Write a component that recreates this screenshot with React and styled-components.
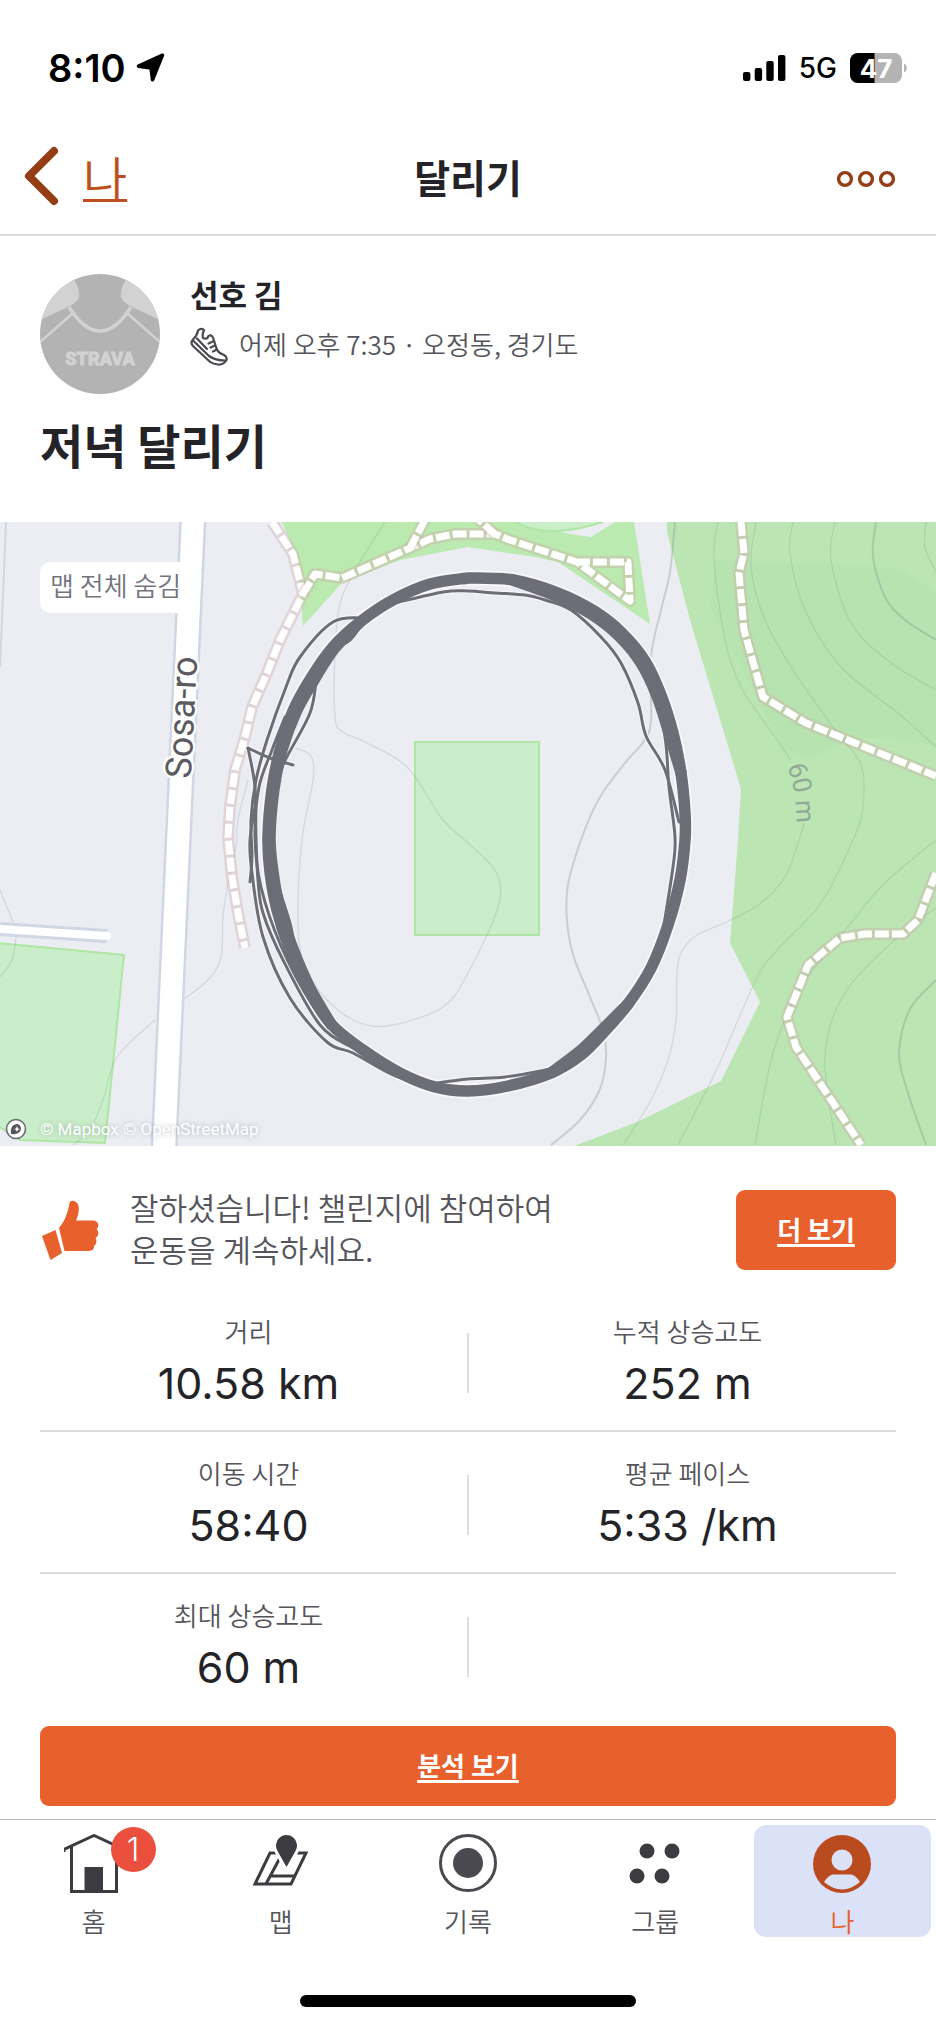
import React from "react";
import styled, { createGlobalStyle } from "styled-components";

const colors = {
  orange: "#e8602b",
  rust: "#c04f1f",
  darkRust: "#953d17",
  text: "#242428",
  muted: "#55555b",
  icon: "#3c3b40",
  line: "#dcdde1",
  route: "#6d6d78",
};

const korean = `"Noto Sans CJK KR", sans-serif`;
const latin = `Inter, "Noto Sans CJK KR", sans-serif`;

const GlobalStyle = createGlobalStyle`
  *, *::before, *::after {
    box-sizing: border-box;
  }
  body {
    margin: 0;
    background: #fff;
    color: ${colors.text};
    font-family: ${korean};
  }
  h1, h2, p, dl, dt, dd, ul {
    margin: 0;
    padding: 0;
    font-weight: 400;
  }
  svg {
    display: block;
    flex-shrink: 0;
  }
`;

const Screen = styled.div`
  display: flex;
  flex-direction: column;
  min-height: 100vh;
`;

const StatusBar = styled.div`
  display: flex;
  align-items: center;
  justify-content: space-between;
  height: 118px;
  padding: 18px 28px 0 48px;
  color: #000;
  font-family: ${latin};
`;

const StatusGroup = styled.div`
  display: flex;
  align-items: center;
  gap: ${(props) => props.$gap}px;
`;

const Clock = styled.span`
  font-size: 38px;
  font-weight: 600;
  line-height: 40px;
`;

const Network = styled.span`
  font-size: 28px;
  font-weight: 500;
  line-height: 32px;
`;

const Header = styled.header`
  display: grid;
  grid-template-columns: 1fr auto 1fr;
  align-items: center;
  height: 118px;
  padding: 0 24px;
  border-bottom: 2px solid ${colors.line};
`;

const BackLink = styled.a`
  display: flex;
  align-items: center;
  justify-self: start;
  gap: 24px;
  color: ${colors.rust};
  font-size: 48px;
  font-weight: 350;
  line-height: 60px;
  text-decoration: none;

  span {
    text-decoration: underline;
    text-decoration-thickness: 3px;
    text-underline-offset: 2px;
    text-decoration-skip-ink: none;
  }
`;

const HeaderTitle = styled.h1`
  font-size: 39px;
  font-weight: 700;
  line-height: 60px;
`;

const MoreButton = styled.button`
  justify-self: end;
  margin-right: 16px;
  padding: 0;
  border: 0;
  background: none;
  cursor: pointer;
`;

const Profile = styled.section`
  padding: 38px 40px 48px;
`;

const Athlete = styled.div`
  display: flex;
  gap: 30px;
  margin-bottom: 20px;
`;

const AthleteText = styled.div`
  display: flex;
  flex-direction: column;
  gap: 8px;
`;

const Name = styled.p`
  font-size: 31px;
  font-weight: 700;
  line-height: 40px;
`;

const Meta = styled.p`
  display: flex;
  align-items: center;
  gap: 11px;
  color: ${colors.muted};
  font-size: 26px;
  font-weight: 350;
  line-height: 40px;
`;

const ActivityTitle = styled.h2`
  font-size: 47px;
  font-weight: 700;
  line-height: 60px;
`;

const MapFrame = styled.section`
  position: relative;
  overflow: hidden;
  background: #ebedf3;
`;

const MapSvg = styled.svg`
  width: 100%;
  height: auto;
`;

const MapChip = styled.span`
  position: absolute;
  top: 40px;
  left: 40px;
  padding: 0 10px 6px;
  border-radius: 10px;
  background: #fff;
  color: #74737f;
  font-size: 26px;
  font-weight: 350;
  line-height: 45px;
`;

const Attribution = styled.div`
  position: absolute;
  bottom: 4px;
  left: 5px;
  display: flex;
  align-items: center;
  gap: 13px;
  color: #fff;
  font-family: Roboto, sans-serif;
  font-size: 17px;
  line-height: 26px;
  text-shadow: 0 0 5px rgba(90, 90, 110, 0.4);
`;

const Promo = styled.section`
  display: flex;
  align-items: center;
  gap: 28px;
  padding: 40px 40px 16px;
`;

const PromoText = styled.p`
  flex: 1;
  padding-bottom: 4px;
  color: ${colors.muted};
  font-size: 31px;
  font-weight: 350;
  line-height: 42px;
  word-break: keep-all;

  span {
    display: block;
  }
`;

const Button = styled.button`
  display: block;
  width: ${(props) => (props.$block ? "100%" : "160px")};
  height: 80px;
  padding: 0 0 4px;
  border: 0;
  border-radius: 9px;
  background: ${colors.orange};
  color: #fff;
  font-family: ${korean};
  font-size: 26px;
  font-weight: 700;
  text-decoration: underline;
  text-decoration-thickness: 3px;
  text-underline-offset: 4px;
  text-decoration-skip-ink: none;
  cursor: pointer;
`;

const Stats = styled.dl`
  padding: 0 40px;
`;

const StatRow = styled.div`
  display: grid;
  grid-template-columns: 1fr 2px 1fr;
  column-gap: 10px;
  align-items: center;
  height: 142px;
  padding-bottom: 18px;
  border-bottom: 2px solid ${(props) => (props.$last ? "transparent" : colors.line)};
`;

const Stat = styled.div`
  display: flex;
  flex-direction: column;
  align-items: center;
  gap: 8px;
  padding-top: 16px;
`;

const Separator = styled.span`
  height: 60px;
  margin-top: 24px;
  background: ${colors.line};
`;

const StatLabel = styled.dt`
  color: ${colors.muted};
  font-size: 26px;
  font-weight: 350;
  line-height: 40px;
`;

const StatValue = styled.dd`
  font-family: ${latin};
  font-size: 43px;
  line-height: 48px;
`;

const Analysis = styled.div`
  padding: 10px 40px 13px;
`;

const TabBar = styled.nav`
  display: grid;
  grid-template-columns: repeat(5, 1fr);
  padding: 5px 0;
  border-top: 1px solid #b9b9bb;
`;

const Tab = styled.a`
  display: flex;
  flex-direction: column;
  align-items: center;
  height: 112px;
  margin: 0 5px;
  padding-top: 9px;
  gap: 7px;
  border-radius: 12px;
  background: ${(props) => (props.$active ? "#dbe1f6" : "transparent")};
  color: ${(props) => (props.$active ? colors.orange : colors.muted)};
  font-size: 26px;
  font-weight: 350;
  line-height: 40px;
  text-decoration: none;
`;

const TabIcon = styled.span`
  position: relative;
`;

const Badge = styled.span`
  position: absolute;
  top: -7px;
  right: -32px;
  width: 45px;
  height: 45px;
  border-radius: 50%;
  background: #ea4e3d;
  color: #fff;
  font-family: ${latin};
  font-size: 32px;
  line-height: 45px;
  text-align: center;
`;

const HomeIndicator = styled.div`
  width: 36%;
  height: 12px;
  margin: 53px auto 20px;
  border-radius: 6px;
  background: #000;
`;

// Catmull-Rom through the points, written out as cubic beziers
function smooth(points) {
  let d = `M${points[0].join(" ")}`;
  for (let i = 0; i < points.length - 1; i++) {
    const p0 = points[i - 1] || points[i];
    const p1 = points[i];
    const p2 = points[i + 1];
    const p3 = points[i + 2] || p2;
    const c1 = [p1[0] + (p2[0] - p0[0]) / 6, p1[1] + (p2[1] - p0[1]) / 6];
    const c2 = [p2[0] - (p3[0] - p1[0]) / 6, p2[1] - (p3[1] - p1[1]) / 6];
    d += `C${c1.join(" ")} ${c2.join(" ")} ${p2.join(" ")}`;
  }
  return d;
}

const contours = [
  [[718, 0], [714, 38], [725, 118], [741, 165], [768, 205], [791, 238]],
  [[804, 301], [799, 318], [785, 355], [761, 381], [731, 398], [697, 413], [682, 429], [677, 451], [676, 498], [668, 538], [650, 580], [623, 623]],
  [[756, 0], [751, 45], [765, 98], [795, 151], [835, 208], [861, 243], [863, 285], [853, 318], [821, 381], [780, 425], [761, 448], [741, 491], [715, 551], [678, 623]],
  [[793, 0], [790, 31], [805, 88], [841, 145], [898, 191], [936, 225]],
  [[835, 0], [831, 38], [851, 101], [891, 141], [936, 168]],
  [[926, 0], [925, 25], [936, 50]],
  [[936, 318], [885, 361], [851, 401], [801, 465], [773, 531], [755, 623]],
  [[936, 386], [898, 415], [845, 471], [825, 535], [836, 623]],
  [[385, 0], [357, 45], [340, 81], [335, 131], [335, 195], [343, 210], [367, 221], [407, 245], [443, 298], [468, 321], [496, 350], [498, 385], [468, 451], [443, 485], [393, 503], [360, 501], [327, 478], [305, 445], [298, 401], [302, 318], [313, 258], [311, 234], [295, 226]],
  [[248, 258], [238, 298], [236, 325], [228, 361], [223, 395], [221, 435], [208, 458], [184, 477]],
  [[155, 498], [117, 535], [103, 578], [90, 608], [73, 623]],
  [[0, 368], [13, 400]],
  [[16, 415], [12, 438], [0, 455]],
];

const indexContours = [
  [[675, 0], [670, 50], [661, 88], [651, 135], [651, 198], [644, 219], [625, 241], [600, 275], [581, 318], [567, 370], [571, 425], [590, 475], [603, 508], [606, 535], [600, 567], [580, 598], [551, 623]],
  [[876, 0], [873, 35], [885, 75], [905, 98], [936, 118]],
  [[936, 458], [910, 487], [899, 531], [908, 571], [926, 623]],
];

const footpaths = [
  "M272 0L293 32L303 72L280 118L267 151L252 185L245 215L235 248L230 285L228 315L232 355L238 391L245 426",
  "M303 72L315 52L342 56L410 26L430 17L455 12H495L510 18L577 40L630 79L628 40H577",
  "M410 26L425 -2",
  "M495 12L479 -2",
  "M741 0L744 31L739 51L744 108L763 175L806 201L936 254",
  "M936 351L918 398L903 412H865L840 416L808 443L787 495L796 525L861 623",
];

const loop = [
  [468, 56], [430, 62], [393, 78], [360, 100], [333, 125], [311, 156], [293, 189], [280, 228], [272, 267], [268, 315], [270, 350], [277, 388], [290, 428], [308, 467], [331, 502], [363, 528], [400, 551], [435, 565], [468, 569], [508, 564], [551, 551], [581, 533], [603, 511], [628, 482], [651, 446], [668, 403], [680, 358], [685, 318], [685, 291], [681, 251], [673, 211], [661, 173], [645, 139], [622, 111], [594, 89], [558, 71], [513, 58], [468, 56],
];

// stretches where the laps spread out; both ends sit on the loop
const wideStretches = [
  [[513, 58], [556, 74], [591, 92], [619, 114], [641, 141], [657, 174], [669, 211], [681, 251]],
  [[360, 100], [334, 127], [314, 158], [296, 190], [282, 228], [274, 267], [270, 315], [273, 350], [280, 388], [293, 427], [310, 466], [331, 502]],
  [[551, 551], [579, 530], [601, 509], [628, 482]],
];

// single laps that drift away from the bundle
const strands = [
  [[365, 96], [333, 100], [300, 135], [286, 165], [267, 218], [256, 258], [251, 298], [252, 335], [250, 360]],
  [[293, 243], [270, 236], [248, 226]],
  [[248, 226], [255, 265], [256, 315], [258, 358], [263, 391], [283, 438], [320, 503], [353, 526]],
  [[256, 280], [250, 318], [252, 351], [263, 415], [290, 476], [327, 520], [353, 531], [393, 553], [425, 563]],
  [[360, 105], [350, 118], [330, 131], [318, 151], [310, 191], [283, 243], [275, 275]],
  [[285, 195], [272, 228], [259, 265], [255, 315], [261, 365], [281, 424], [312, 482], [340, 513]],
  [[395, 81], [443, 70], [468, 69], [495, 71], [525, 73], [545, 78], [571, 88], [601, 115], [621, 141], [638, 181], [646, 214], [665, 248], [679, 300]],
  [[653, 165], [665, 215], [669, 265], [675, 315], [673, 345], [662, 415]],
  [[430, 562], [468, 557], [505, 555], [551, 547]],
  [[272, 335], [281, 372], [290, 401], [296, 428], [308, 460]],
];

function Trail({ d }) {
  return (
    <g fill="none" strokeLinejoin="round">
      <path d={d} stroke="#cfa8a8" strokeOpacity="0.36" strokeWidth="12" />
      <path d={d} stroke="#fff" strokeWidth="7" strokeDasharray="14 3" />
    </g>
  );
}

function RouteMap() {
  return (
    <MapSvg viewBox="0 0 936 624" role="img" aria-label="Sosa-ro">
      <path
        d="M282 0L298 38L303 104L342 61L400 38L468 25L535 35L558 40L650 102L634 0Z"
        fill="#baeab0"
      />
      <path d="M508 0H518L570 12L591 15L615 0Z" fill="#ebedf3" />
      <path d="M516 0Q546 18 603 0" fill="#caeec9" stroke="#aee6a3" strokeWidth="2" />
      <path
        d="M667 0V10L690 98L741 267L738 318L730 421L760 480L721 559L637 600L574 624H936V0Z"
        fill="#bbe6b4"
      />
      <path
        d="M716 38L898 46L936 70V225L885 215L848 218L813 235L785 230L761 185L710 85Z"
        fill="#b7e3b1"
      />
      <path
        d="M-2 421L124 433L105 621L20 618L-2 604Z"
        fill="#caeec9"
        stroke="#aee6a3"
        strokeWidth="2"
      />
      <rect x="415" y="220" width="124" height="193" fill="#caeec9" stroke="#aee6a3" strokeWidth="2" />

      <g fill="none" stroke="#6f8a84" strokeOpacity="0.2" strokeWidth="1.3">
        {contours.map((points, i) => (
          <path key={i} d={smooth(points)} />
        ))}
      </g>
      <g fill="none" stroke="#6f8a84" strokeOpacity="0.3" strokeWidth="2">
        {indexContours.map((points, i) => (
          <path key={i} d={smooth(points)} />
        ))}
      </g>

      <path d="M6 0L0 145" stroke="#d0d6e3" strokeWidth="2" />
      <path d="M0 407L107 414" stroke="#d0d6e3" strokeWidth="14" />
      <path d="M0 407L107 414" stroke="#fff" strokeWidth="8" strokeLinecap="round" />
      <path d="M193 -4L164 628" stroke="#d0d6e3" strokeWidth="27" />
      <path d="M193 -4L164 628" stroke="#fff" strokeWidth="22" />

      {footpaths.map((d) => (
        <Trail key={d} d={d} />
      ))}

      <g fill="none" stroke="#f8f8fb" strokeLinecap="round">
        <path d={smooth(loop)} strokeWidth="15" />
        {strands.map((points, i) => (
          <path key={i} d={smooth(points)} strokeWidth="5" />
        ))}
      </g>
      <g fill="none" stroke={colors.route} strokeLinecap="round">
        <path d={smooth(loop)} strokeWidth="11.5" />
        {wideStretches.map((points, i) => (
          <path key={i} d={smooth(points)} strokeWidth="11.5" />
        ))}
        {strands.map((points, i) => (
          <path key={i} d={smooth(points)} strokeWidth="3" />
        ))}
      </g>

      <text
        transform="translate(194 196) rotate(-87)"
        textAnchor="middle"
        fontFamily="Roboto, sans-serif"
        fontSize="36"
        fill="#5a5a5f"
        stroke="#fff"
        strokeWidth="5"
        strokeLinejoin="round"
        paintOrder="stroke"
      >
        Sosa-ro
      </text>
      <path id="elevation-line" d="M787 244C794 264 797 277 797 322" fill="none" />
      <text fontFamily="Roboto, sans-serif" fontSize="26" fill="#93a998">
        <textPath href="#elevation-line">60 m</textPath>
      </text>
    </MapSvg>
  );
}

function LocationIcon() {
  return (
    <svg width="30" height="30" viewBox="0 0 30 30">
      <path
        d="M2.5 13.2L26.5 2.2L16.5 26.8L15 15Z"
        stroke="#000"
        strokeWidth="3.5"
        strokeLinejoin="round"
      />
    </svg>
  );
}

function SignalIcon() {
  return (
    <svg width="43" height="28" viewBox="0 0 43 28">
      <rect x="0" y="18" width="7.4" height="9" rx="2" />
      <rect x="11.7" y="14" width="7.4" height="13" rx="2" />
      <rect x="23.3" y="7" width="7.4" height="20" rx="2" />
      <rect x="35" y="1" width="7.4" height="26" rx="2" />
    </svg>
  );
}

function BatteryIcon() {
  return (
    <svg width="58" height="30" viewBox="0 0 58 30">
      <rect width="52" height="30" rx="8" fill="#b3b3b3" />
      <path d="M8 0H24.5V30H8A8 8 0 0 1 0 22V8A8 8 0 0 1 8 0Z" />
      <path d="M54 10.5A5 5 0 0 1 54 19.5Z" fill="#b3b3b3" />
      <text
        x="26"
        y="25"
        textAnchor="middle"
        fill="#fff"
        fontFamily="Inter, sans-serif"
        fontSize="26"
        fontWeight="700"
      >
        47
      </text>
    </svg>
  );
}

function Avatar() {
  return (
    <svg width="120" height="120" viewBox="0 0 120 120" role="img" aria-label="선호 김">
      <clipPath id="avatar-clip">
        <circle cx="60" cy="60" r="60" />
      </clipPath>
      <g clipPath="url(#avatar-clip)">
        <rect width="120" height="120" fill="#b3b3b3" />
        <g fill="#d2d2d2">
          <path d="M33 4Q40 14 39 23Q37 29 26 34L-2 47V0Z" />
          <path d="M87 4Q80 14 81 23Q83 29 94 34L122 47V0Z" />
        </g>
        <g fill="none" stroke="#d2d2d2">
          <path d="M29 33Q44 57 60 57Q76 57 91 33" strokeWidth="3.4" />
          <path d="M33 39L0 68M87 39L120 68" strokeWidth="2.4" />
        </g>
        <text
          x="60"
          y="91"
          textAnchor="middle"
          fill="#d2d2d2"
          stroke="#d2d2d2"
          strokeWidth="0.8"
          fontFamily="Roboto, sans-serif"
          fontSize="18"
          fontWeight="900"
        >
          STRAVA
        </text>
      </g>
    </svg>
  );
}

function ShoeIcon() {
  return (
    <svg
      width="38"
      height="44"
      viewBox="0 -6 38 44"
      fill="none"
      stroke="#4a494f"
      strokeWidth="2.2"
      strokeLinejoin="round"
      strokeLinecap="round"
    >
      <path d="M8 2.500Q11 -0.500 14 2Q12 7 13 10Q17 12 18.500 8Q21 6 23 9.500L26 19Q27 24.500 34 27Q37.500 29 36.500 32Q33.500 37 28 36.500Q22 36 18 32L3 18Q0 14.500 3 11.500Q7 8 8 2.500Z" />
      <path d="M3 12.500L19 28Q25 32.500 35.500 32.500M7 10.500L17 21" />
      <path d="M18.500 15.500L23 13.500M20.500 19.500L25 17.500M23 23.500L27 21.500" />
    </svg>
  );
}

function ThumbIcon() {
  return (
    <svg width="62" height="60" viewBox="0 0 62 60" fill={colors.orange}>
      <path d="M19 28C25 21 28 12 29.500 3C30 -0.500 37 0 38.500 6C39.500 11 38 16 36 20.500H53C60 21 59 28 56.500 29C60 32 58 37 55.500 38C57.500 41 56 45 54 46C54.500 50 51 51 48 51H24.500Z" />
      <path d="M2 36L15.500 30L22 53L10.500 60Z" />
    </svg>
  );
}

function HomeIcon() {
  return (
    <svg width="60" height="60" viewBox="0 0 60 60" fill="none" stroke={colors.icon} strokeWidth="3">
      <path d="M0 18V15.500L30 1.500L60 15.500V18" />
      <path d="M7.500 13V57.500H52.500V13" />
      <rect x="20.500" y="33" width="18.500" height="24" fill={colors.icon} stroke="none" />
    </svg>
  );
}

function MapsIcon() {
  return (
    <svg width="60" height="60" viewBox="0 0 60 60" fill="none" stroke={colors.icon} strokeWidth="3">
      <path d="M19 19H55L40 50H4Z" />
      <path d="M15 50L31 20M18 42H44" />
      <path
        d="M35.500 35L26 17A11 11 0 1 1 45 17Z"
        stroke="#fff"
        strokeWidth="5"
        fill={colors.icon}
      />
      <path
        d="M35.500 33L26.500 17A10.500 10.500 0 1 1 44.500 17Z"
        stroke="none"
        fill={colors.icon}
      />
    </svg>
  );
}

function RecordIcon() {
  return (
    <svg width="60" height="60" viewBox="0 0 60 60">
      <circle cx="30" cy="29" r="27.5" fill="none" stroke="#4a494f" strokeWidth="3" />
      <circle cx="30" cy="29" r="15" fill="#4a494f" />
    </svg>
  );
}

function GroupsIcon() {
  return (
    <svg width="60" height="60" viewBox="0 0 60 60" fill={colors.icon}>
      <circle cx="22" cy="17" r="7.5" />
      <circle cx="47" cy="17" r="7.5" />
      <circle cx="12" cy="42" r="7.5" />
      <circle cx="37" cy="42" r="7.5" />
    </svg>
  );
}

function YouIcon() {
  return (
    <svg width="60" height="60" viewBox="0 0 60 60">
      <circle cx="30" cy="30" r="29" fill="#ba4b1e" />
      <circle cx="30" cy="26" r="10.5" fill="#dbe1f6" />
      <path d="M12 48Q17 40.500 21 40.500H39Q43 40.500 48 48Q30 63 12 48Z" fill="#dbe1f6" />
    </svg>
  );
}

const stats = [
  [
    { label: "거리", value: "10.58 km" },
    { label: "누적 상승고도", value: "252 m" },
  ],
  [
    { label: "이동 시간", value: "58:40" },
    { label: "평균 페이스", value: "5:33 /km" },
  ],
  [{ label: "최대 상승고도", value: "60 m" }],
];

const tabs = [
  { label: "홈", icon: HomeIcon, badge: 1 },
  { label: "맵", icon: MapsIcon },
  { label: "기록", icon: RecordIcon },
  { label: "그룹", icon: GroupsIcon },
  { label: "나", icon: YouIcon, active: true },
];

function StatCell({ label, value }) {
  return (
    <Stat>
      <StatLabel>{label}</StatLabel>
      <StatValue>{value}</StatValue>
    </Stat>
  );
}

export default function App() {
  return (
    <>
      <GlobalStyle />
      <Screen>
        <StatusBar>
          <StatusGroup $gap={10}>
            <Clock>8:10</Clock>
            <LocationIcon />
          </StatusGroup>
          <StatusGroup $gap={13}>
            <SignalIcon />
            <Network>5G</Network>
            <BatteryIcon />
          </StatusGroup>
        </StatusBar>

        <Header>
          <BackLink href="#back">
            <svg width="35" height="60" viewBox="0 0 35 60">
              <path
                d="M30 5L5 30L30 55"
                fill="none"
                stroke={colors.darkRust}
                strokeWidth="8"
                strokeLinecap="round"
                strokeLinejoin="round"
              />
            </svg>
            <span>나</span>
          </BackLink>
          <HeaderTitle>달리기</HeaderTitle>
          <MoreButton type="button" aria-label="더 보기">
            <svg width="60" height="24" viewBox="0 0 60 24" fill="none" stroke={colors.darkRust} strokeWidth="3.4">
              <circle cx="9" cy="15" r="6.4" />
              <circle cx="30" cy="15" r="6.4" />
              <circle cx="51" cy="15" r="6.4" />
            </svg>
          </MoreButton>
        </Header>

        <Profile>
          <Athlete>
            <Avatar />
            <AthleteText>
              <Name>선호 김</Name>
              <Meta>
                <ShoeIcon />
                어제 오후 7:35 · 오정동, 경기도
              </Meta>
            </AthleteText>
          </Athlete>
          <ActivityTitle>저녁 달리기</ActivityTitle>
        </Profile>

        <MapFrame>
          <RouteMap />
          <MapChip>맵 전체 숨김</MapChip>
          <Attribution>
            <svg width="22" height="22" viewBox="0 0 22 22">
              <circle cx="11" cy="11" r="9.5" fill="#fff" stroke="#6b6b70" strokeWidth="1.6" />
              <path d="M6 16Q5 6 12 6A5 5 0 0 1 16 11Q15 17 6 16Z" fill="#55555c" />
              <path d="M12 8L13 10.500L15 11L13 12L12 14L11 12L9 11L11 10.500Z" fill="#fff" />
            </svg>
            © Mapbox © OpenStreetMap
          </Attribution>
        </MapFrame>

        <Promo>
          <ThumbIcon />
          <PromoText>
            <span>잘하셨습니다! 챌린지에 참여하여</span>
            <span>운동을 계속하세요.</span>
          </PromoText>
          <Button type="button">더 보기</Button>
        </Promo>

        <Stats>
          {stats.map((row, i) => (
            <StatRow key={row[0].label} $last={i === stats.length - 1}>
              <StatCell {...row[0]} />
              <Separator />
              {row[1] && <StatCell {...row[1]} />}
            </StatRow>
          ))}
        </Stats>

        <Analysis>
          <Button type="button" $block>
            분석 보기
          </Button>
        </Analysis>

        <TabBar>
          {tabs.map(({ label, icon: Icon, badge, active }) => (
            <Tab key={label} href={`#${label}`} $active={active}>
              <TabIcon>
                <Icon />
                {badge && <Badge>{badge}</Badge>}
              </TabIcon>
              {label}
            </Tab>
          ))}
        </TabBar>
        <HomeIndicator />
      </Screen>
    </>
  );
}
